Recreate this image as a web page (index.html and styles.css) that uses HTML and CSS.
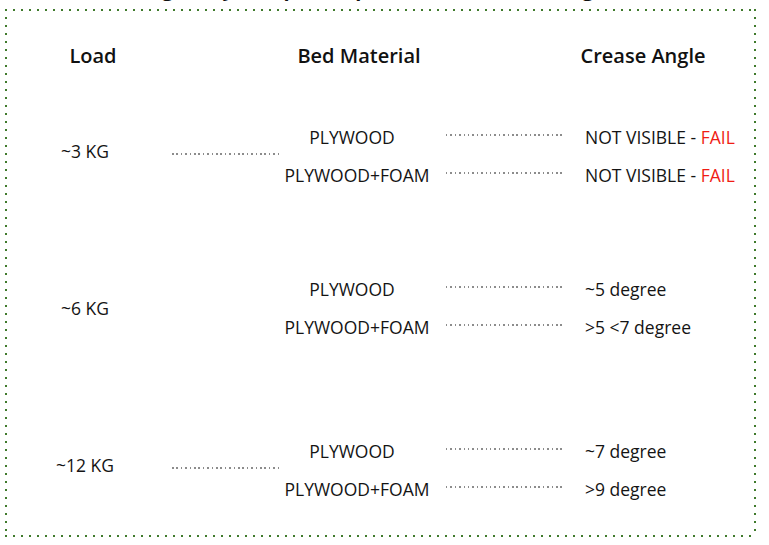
FILE: index.html
```html
<!DOCTYPE html>
<html>
<head>
<meta charset="utf-8">
<link rel="stylesheet" href="styles.css">
</head>
<body>
<h1 class="title">Crease Testing in my test press up to three loads bearing</h1>
<div class="frame">
  <div class="head">
    <div class="h h-load">Load</div>
    <div class="h h-bed">Bed Material</div>
    <div class="h h-angle">Crease Angle</div>
  </div>

  <div class="group group-linked">
    <div class="load-cell">
      <div class="load">~3 KG</div>
      <div class="link"><span class="dots"></span></div>
    </div>
    <div class="pairs">
      <div class="pair">
        <div class="bed bed-short">PLYWOOD</div>
        <div class="conn"><span class="dots"></span></div>
        <div class="angle">NOT VISIBLE - <span class="fail">FAIL</span></div>
      </div>
      <div class="pair">
        <div class="bed">PLYWOOD+FOAM</div>
        <div class="conn"><span class="dots"></span></div>
        <div class="angle">NOT VISIBLE - <span class="fail">FAIL</span></div>
      </div>
    </div>
  </div>

  <div class="group">
    <div class="load-cell">
      <div class="load">~6 KG</div>
      <div class="link"></div>
    </div>
    <div class="pairs">
      <div class="pair">
        <div class="bed bed-short">PLYWOOD</div>
        <div class="conn"><span class="dots"></span></div>
        <div class="angle">~5 degree</div>
      </div>
      <div class="pair">
        <div class="bed">PLYWOOD+FOAM</div>
        <div class="conn"><span class="dots"></span></div>
        <div class="angle">&gt;5 &lt;7 degree</div>
      </div>
    </div>
  </div>

  <div class="group group-linked group-last">
    <div class="load-cell">
      <div class="load">~12 KG</div>
      <div class="link"><span class="dots"></span></div>
    </div>
    <div class="pairs">
      <div class="pair">
        <div class="bed bed-short">PLYWOOD</div>
        <div class="conn"><span class="dots"></span></div>
        <div class="angle">~7 degree</div>
      </div>
      <div class="pair">
        <div class="bed">PLYWOOD+FOAM</div>
        <div class="conn"><span class="dots"></span></div>
        <div class="angle">&gt;9 degree</div>
      </div>
    </div>
  </div>
</div>
</body>
</html>
```

FILE: styles.css
```css
html, body {
  margin: 0;
  padding: 0;
  background: #ffffff;
  overflow: hidden;
}
body {
  width: 769px;
  height: 545px;
  font-family: "Open Sans", "Noto Sans", sans-serif;
  color: #141414;
}
.title {
  margin: -22px 0 0 0;
  padding-left: 28px;
  height: 22px;
  line-height: 22px;
  font-size: 20px;
  font-weight: 700;
  text-align: left;
  white-space: nowrap;
  color: #111;
}
.frame {
  box-sizing: border-box;
  margin: 9px 0 0 5px;
  width: 751px;
  height: 528px;
  padding-top: 35px;
  background-image:
    repeating-linear-gradient(90deg, #3f7a2c 0 2px, transparent 2px 8px),
    repeating-linear-gradient(90deg, #3f7a2c 0 2px, transparent 2px 8px),
    repeating-linear-gradient(180deg, #3f7a2c 0 2px, transparent 2px 8px),
    repeating-linear-gradient(180deg, #3f7a2c 0 2px, transparent 2px 8px);
  background-size: 100% 2px, 100% 2px, 2px 100%, 2px 100%;
  background-position: 0 0, 0 100%, 0 0, 100% 0;
  background-repeat: no-repeat;
}
.head {
  display: flex;
  height: 24px;
  line-height: 24px;
  font-size: 20px;
  font-weight: 600;
  color: #111;
}
.h { text-align: center; }
.h-load { width: 176px; }
.h-bed { width: 356px; }
.h-angle { width: 212px; }

.group {
  display: flex;
  margin-top: 50px;
  font-size: 17.5px;
}
.group + .group { margin-top: 76px; }
.group + .group.group-last { margin-top: 86px; }

.load-cell {
  display: flex;
  align-items: center;
}
.group-linked .load-cell { padding-bottom: 10px; }
.load {
  width: 160px;
  text-align: center;
}
.link {
  width: 119px;
  padding-left: 7px;
  box-sizing: border-box;
  display: flex;
  align-items: center;
}
.link .dots {
  width: 107px;
  margin-top: 6px;
}
.dots {
  display: block;
  height: 1.5px;
  background-image: repeating-linear-gradient(90deg, #8c8c8c 0 1.5px, transparent 1.5px 4.4px);
}
.pairs {
  display: flex;
  flex-direction: column;
}
.pair {
  display: flex;
  align-items: center;
  height: 38px;
}
.bed {
  width: 146px;
  text-align: center;
}
.bed-short { box-sizing: border-box; padding-right: 10px; }
.conn {
  width: 155px;
  padding-left: 16px;
  box-sizing: border-box;
}
.conn .dots {
  width: 117px;
  margin-bottom: 4px;
}
.angle {
  white-space: nowrap;
}
.fail { color: #f01c14; }
```
